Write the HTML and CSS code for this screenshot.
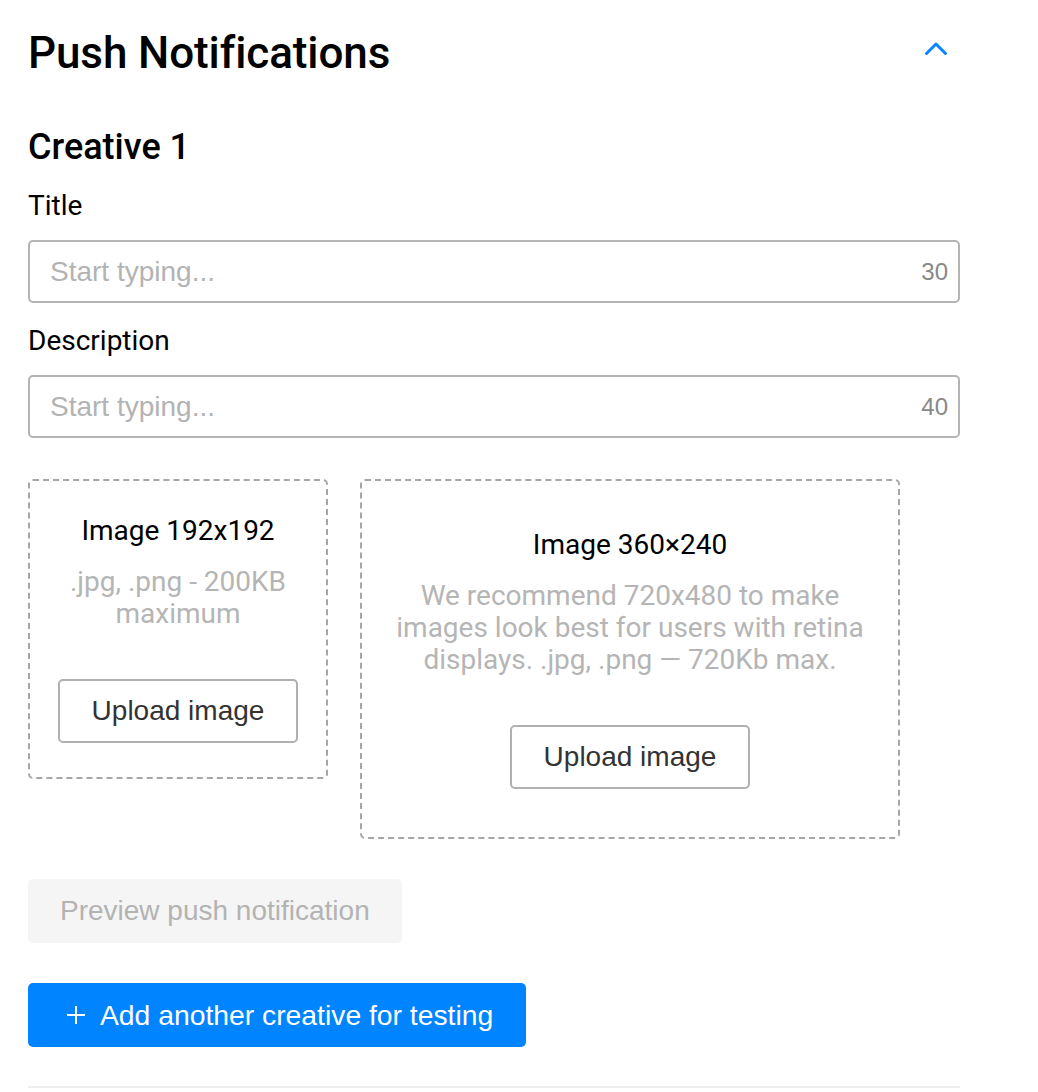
FILE: index.html
```html
<!DOCTYPE html>
<html lang="en">
<head>
<meta charset="utf-8">
<title>Push Notifications</title>
<link rel="stylesheet" href="styles.css">
</head>
<body>
<main class="panel">
  <header class="panel-head">
    <h1 class="panel-title">Push Notifications</h1>
    <button class="collapse" type="button" aria-label="Collapse">
      <svg width="28" height="18" viewBox="0 0 28 18"><path d="M4.5 13.5 L14 4 L23.5 13.5" fill="none" stroke="#0a84ff" stroke-width="3" stroke-linecap="round" stroke-linejoin="round"/></svg>
    </button>
  </header>

  <h2 class="creative-title">Creative 1</h2>

  <label class="field-label">Title</label>
  <div class="field">
    <input class="field-input" type="text" placeholder="Start typing...">
    <span class="field-count">30</span>
  </div>

  <label class="field-label">Description</label>
  <div class="field">
    <input class="field-input" type="text" placeholder="Start typing...">
    <span class="field-count">40</span>
  </div>

  <div class="uploads">
    <div class="drop drop-small">
      <div class="drop-title">Image 192x192</div>
      <div class="drop-hint">.jpg, .png - 200KB<br>maximum</div>
      <button class="upload-btn" type="button">Upload image</button>
    </div>
    <div class="drop drop-large">
      <div class="drop-title">Image 360×240</div>
      <div class="drop-hint">We recommend 720x480 to make<br>images look best for users with retina<br>displays. .jpg, .png — 720Kb max.</div>
      <button class="upload-btn" type="button">Upload image</button>
    </div>
  </div>

  <button class="preview-btn" type="button" disabled>Preview push notification</button>

  <button class="add-btn" type="button">
    <svg class="add-icon" width="20" height="20" viewBox="0 0 20 20"><path d="M10 1 V19 M1 10 H19" stroke="#fff" stroke-width="2"/></svg>
    <span>Add another creative for testing</span>
  </button>

  <hr class="divider">
</main>
</body>
</html>
```

FILE: styles.css
```css
* { box-sizing: border-box; }

html, body {
  margin: 0;
  padding: 0;
  background: #fff;
}

body {
  font-family: Roboto, "Liberation Sans", Arial, sans-serif;
  color: #000;
}

.panel {
  width: 960px;
  padding: 27px 0 0 28px;
  display: flex;
  flex-direction: column;
  align-items: flex-start;
}

.panel-head {
  width: 932px;
  display: flex;
  justify-content: space-between;
  align-items: flex-start;
}

.panel-title {
  margin: 0;
  font-size: 44px;
  line-height: 52px;
  font-weight: 500;
  letter-spacing: -0.1px;
}

.collapse {
  margin: 13px 10px 0 0;
  padding: 0;
  border: 0;
  background: none;
  width: 28px;
  height: 18px;
  display: block;
}
.collapse svg { display: block; }

.creative-title {
  margin: 46px 0 0 0;
  font-size: 36px;
  line-height: 44px;
  font-weight: 500;
}

.field-label {
  display: block;
  margin-top: 21px;
  font-size: 28px;
  line-height: 32px;
  font-weight: 400;
}
.field + .field-label { margin-top: 22px; }

.field {
  margin-top: 18px;
  width: 932px;
  height: 63px;
  border: 2px solid #b4b4b4;
  border-radius: 5px;
  display: flex;
  align-items: center;
  padding: 0 10px 0 20px;
}

.field-input {
  flex: 1;
  min-width: 0;
  border: 0;
  outline: none;
  padding: 0;
  font-family: "Liberation Sans", Arial, sans-serif;
  font-size: 28px;
  color: #333;
  background: transparent;
}
.field-input::placeholder { color: #b3b3b3; }

.field-count {
  font-family: "Liberation Sans", Arial, sans-serif;
  font-size: 24px;
  color: #888;
}

.uploads {
  margin-top: 41px;
  display: flex;
  align-items: flex-start;
  gap: 32px;
}

.drop {
  border: 2px dashed #a6a6a6;
  border-radius: 5px;
  display: flex;
  flex-direction: column;
  align-items: center;
  justify-content: center;
  text-align: center;
}
.drop-small { width: 300px; height: 300px; }
.drop-large { width: 540px; height: 360px; }

.drop-title {
  font-size: 28px;
  line-height: 32px;
  color: #000;
}

.drop-hint {
  margin-top: 19px;
  font-size: 28px;
  line-height: 32px;
  color: #b5b5b5;
}

.upload-btn {
  margin-top: 49px;
  width: 240px;
  height: 64px;
  border: 2px solid #b0b0b0;
  border-radius: 5px;
  background: #fff;
  font-family: "Liberation Sans", Arial, sans-serif;
  font-size: 28px;
  color: #333;
  padding: 0;
}

.preview-btn {
  margin-top: 40px;
  height: 64px;
  padding: 0 32px;
  border: 0;
  border-radius: 5px;
  background: #f5f5f5;
  font-family: "Liberation Sans", Arial, sans-serif;
  font-size: 28px;
  color: #b3b3b3;
}

.add-btn {
  margin-top: 40px;
  height: 64px;
  padding: 0 33px 0 38px;
  border: 0;
  border-radius: 5px;
  background: #0084ff;
  color: #fff;
  display: flex;
  align-items: center;
  gap: 14px;
  font-family: "Liberation Sans", Arial, sans-serif;
  font-size: 28.3px;
}
.add-icon { display: block; }

.divider {
  margin: 39px 0 0 0;
  width: 932px;
  height: 2px;
  border: 0;
  background: #eeeeee;
}
```
